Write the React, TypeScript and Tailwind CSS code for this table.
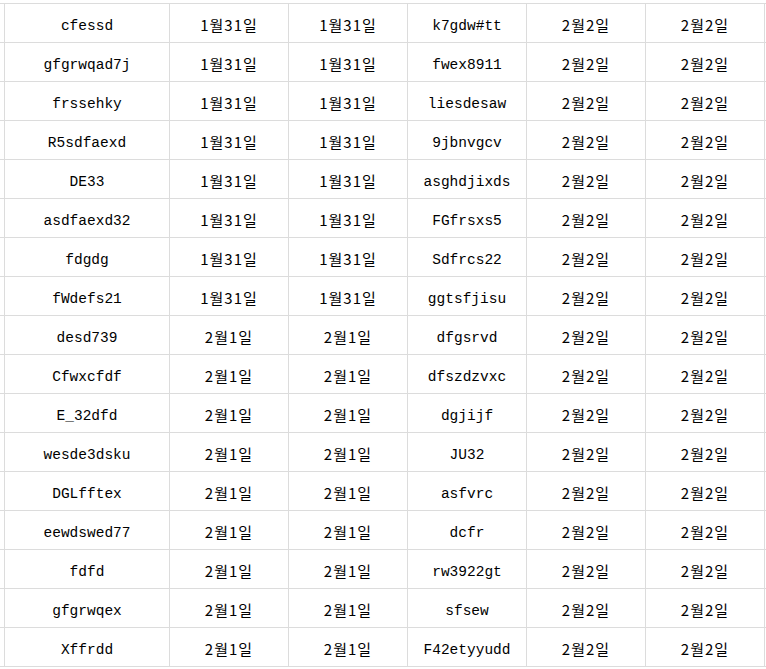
import React from "react";

const rows: Array<[string, string, string, string, string, string]> = [
    ["cfessd", "1월31일", "1월31일", "k7gdw#tt", "2월2일", "2월2일"],
    ["gfgrwqad7j", "1월31일", "1월31일", "fwex8911", "2월2일", "2월2일"],
    ["frssehky", "1월31일", "1월31일", "liesdesaw", "2월2일", "2월2일"],
    ["R5sdfaexd", "1월31일", "1월31일", "9jbnvgcv", "2월2일", "2월2일"],
    ["DE33", "1월31일", "1월31일", "asghdjixds", "2월2일", "2월2일"],
    ["asdfaexd32", "1월31일", "1월31일", "FGfrsxs5", "2월2일", "2월2일"],
    ["fdgdg", "1월31일", "1월31일", "Sdfrcs22", "2월2일", "2월2일"],
    ["fWdefs21", "1월31일", "1월31일", "ggtsfjisu", "2월2일", "2월2일"],
    ["desd739", "2월1일", "2월1일", "dfgsrvd", "2월2일", "2월2일"],
    ["Cfwxcfdf", "2월1일", "2월1일", "dfszdzvxc", "2월2일", "2월2일"],
    ["E_32dfd", "2월1일", "2월1일", "dgjijf", "2월2일", "2월2일"],
    ["wesde3dsku", "2월1일", "2월1일", "JU32", "2월2일", "2월2일"],
    ["DGLfftex", "2월1일", "2월1일", "asfvrc", "2월2일", "2월2일"],
    ["eewdswed77", "2월1일", "2월1일", "dcfr", "2월2일", "2월2일"],
    ["fdfd", "2월1일", "2월1일", "rw3922gt", "2월2일", "2월2일"],
    ["gfgrwqex", "2월1일", "2월1일", "sfsew", "2월2일", "2월2일"],
    ["Xffrdd", "2월1일", "2월1일", "F42etyyudd", "2월2일", "2월2일"],
];

// code-ish text sits a little lower than the dates in the sheet
const mono = "font-['Liberation_Mono',monospace] text-[14.5px] pt-[7px]";
const kr = "font-['Noto_Sans_CJK_KR',sans-serif] text-[15px] tracking-[1px] pt-[4px]";

const Cell: React.FC<{ text: string; code?: boolean; last?: boolean }> = ({ text, code, last }) => {
    return (
        <div className={`flex items-center justify-center border-l border-[#dcdcdc] text-black ${last ? "border-r" : ""} ${code ? mono : kr}`}>
            {text}
        </div>
    );
};

const App: React.FC = () => {
    return (
        <div className="w-[766px] h-[669px] bg-white overflow-hidden">
            <div className="mt-[3px] border-t border-[#dcdcdc]">
                {rows.map((row, index) => (
                    <div key={index} className="grid grid-cols-[4px_165px_119px_119px_119px_119px_120px_1fr] h-[39px] border-b border-[#dcdcdc]">
                        <div />
                        <Cell text={row[0]} code />
                        <Cell text={row[1]} />
                        <Cell text={row[2]} />
                        <Cell text={row[3]} code />
                        <Cell text={row[4]} />
                        <Cell text={row[5]} last />
                        <div />
                    </div>
                ))}
            </div>
        </div>
    );
};

export default App;
